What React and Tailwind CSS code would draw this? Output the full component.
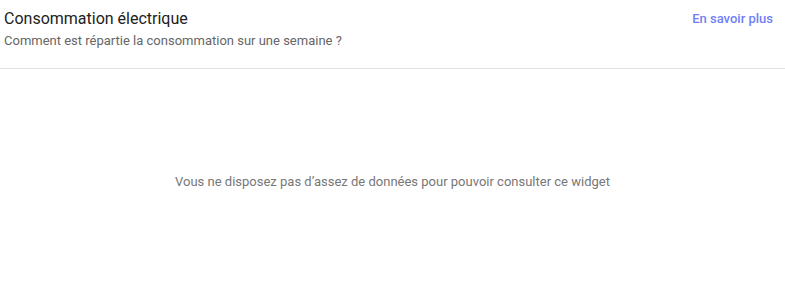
import React from 'react';

// ─── Widget consommation électrique (état vide) ───────────────────────────────
const App = () => {
    return (
        <div className="w-[785px] h-[293px] bg-white flex flex-col" style={{ fontFamily: 'Roboto, "Noto Sans", sans-serif' }}>
            {/* En-tête */}
            <div className="flex justify-between items-start pl-[4px] pr-[11px] pt-[8px] h-[69px] border-b border-[#e0e0e0]">
                <div>
                    <h2 className="text-[16px] leading-[22px] text-[#212121]">Consommation électrique</h2>
                    <p className="text-[13px] leading-[18px] mt-[2px] text-[#666666]">
                        Comment est répartie la consommation sur une semaine ?
                    </p>
                </div>
                <a className="text-[13px] leading-[20px] font-medium text-[#6f7ff7] mt-[1px] mr-[1px]">En savoir plus</a>
            </div>

            {/* Contenu */}
            <div className="flex-1 flex items-center justify-center pt-[2px]">
                <p className="text-[13px] text-[#777777]">
                    Vous ne disposez pas d’assez de données pour pouvoir consulter ce widget
                </p>
            </div>
        </div>
    );
};

export default App;
